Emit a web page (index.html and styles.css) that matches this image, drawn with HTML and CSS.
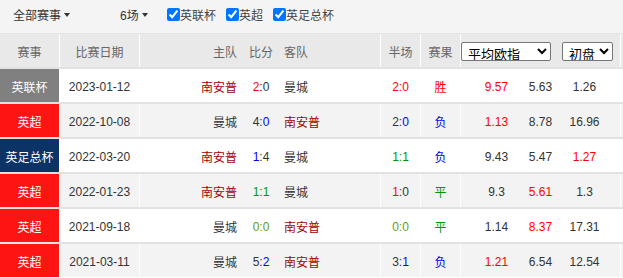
FILE: index.html
```html
<!DOCTYPE html>
<html lang="zh-CN">
<head>
<meta charset="utf-8">
<title>交战历史</title>
<link rel="stylesheet" href="styles.css">
</head>
<body>
<div class="page">
  <div class="toolbar">
    <div class="dropdown dd-league">全部赛事<span class="caret"></span></div>
    <div class="dropdown dd-count">6场<span class="caret"></span></div>
    <label class="chk"><input type="checkbox" checked>英联杯</label>
    <label class="chk"><input type="checkbox" checked>英超</label>
    <label class="chk"><input type="checkbox" checked>英足总杯</label>
  </div>

  <div class="row head">
    <div class="c league">赛事</div>
    <div class="c date">比赛日期</div>
    <div class="c home">主队</div>
    <div class="c score">比分</div>
    <div class="c away">客队</div>
    <div class="c half">半场</div>
    <div class="c res">赛果</div>
    <div class="c odds selects">
      <select class="sel sel-wide"><option>平均欧指</option></select>
      <select class="sel sel-narrow"><option>初盘</option></select>
    </div>
    <div class="c rest"></div>
  </div>

  <div class="row">
    <div class="c league lg-cup">英联杯</div>
    <div class="c date">2023-01-12</div>
    <div class="c home team-hl">南安普</div>
    <div class="c score"><span class="red">2</span>:0</div>
    <div class="c away">曼城</div>
    <div class="c half"><span class="red">2:0</span></div>
    <div class="c res red">胜</div>
    <div class="c odds"><span class="o red">9.57</span><span class="o">5.63</span><span class="o">1.26</span></div>
    <div class="c rest"></div>
  </div>

  <div class="row alt">
    <div class="c league lg-pl">英超</div>
    <div class="c date">2022-10-08</div>
    <div class="c home">曼城</div>
    <div class="c score">4:<span class="blue">0</span></div>
    <div class="c away team-hl">南安普</div>
    <div class="c half">2:<span class="blue">0</span></div>
    <div class="c res blue">负</div>
    <div class="c odds"><span class="o red">1.13</span><span class="o">8.78</span><span class="o">16.96</span></div>
    <div class="c rest"></div>
  </div>

  <div class="row">
    <div class="c league lg-fa">英足总杯</div>
    <div class="c date">2022-03-20</div>
    <div class="c home team-hl">南安普</div>
    <div class="c score"><span class="blue">1</span>:4</div>
    <div class="c away">曼城</div>
    <div class="c half green">1:1</div>
    <div class="c res blue">负</div>
    <div class="c odds"><span class="o">9.43</span><span class="o">5.47</span><span class="o red">1.27</span></div>
    <div class="c rest"></div>
  </div>

  <div class="row alt">
    <div class="c league lg-pl">英超</div>
    <div class="c date">2022-01-23</div>
    <div class="c home team-hl">南安普</div>
    <div class="c score green">1:1</div>
    <div class="c away">曼城</div>
    <div class="c half"><span class="red">1</span>:0</div>
    <div class="c res green">平</div>
    <div class="c odds"><span class="o">9.3</span><span class="o red">5.61</span><span class="o">1.3</span></div>
    <div class="c rest"></div>
  </div>

  <div class="row">
    <div class="c league lg-pl">英超</div>
    <div class="c date">2021-09-18</div>
    <div class="c home">曼城</div>
    <div class="c score olive">0:0</div>
    <div class="c away team-hl">南安普</div>
    <div class="c half olive">0:0</div>
    <div class="c res green">平</div>
    <div class="c odds"><span class="o">1.14</span><span class="o red">8.37</span><span class="o">17.31</span></div>
    <div class="c rest"></div>
  </div>

  <div class="row alt">
    <div class="c league lg-pl">英超</div>
    <div class="c date">2021-03-11</div>
    <div class="c home">曼城</div>
    <div class="c score">5:<span class="blue">2</span></div>
    <div class="c away team-hl">南安普</div>
    <div class="c half">3:<span class="blue">1</span></div>
    <div class="c res blue">负</div>
    <div class="c odds"><span class="o red">1.21</span><span class="o">6.54</span><span class="o">12.54</span></div>
    <div class="c rest"></div>
  </div>
</div>
</body>
</html>
```

FILE: styles.css
```css
* { box-sizing: border-box; }

html, body {
  margin: 0;
  padding: 0;
  background: #fff;
}

body {
  font-family: "Liberation Sans", "Noto Sans CJK SC", sans-serif;
  font-size: 12px;
  color: #333;
  overflow: hidden;
}

.page {
  width: 623px;
  overflow: hidden;
}

/* top filter bar */
.toolbar {
  height: 34px;
  background: #f4f4f4;
  border-bottom: 1px solid #e4e4e4;
  display: flex;
  align-items: center;
  padding-left: 13px;
  padding-bottom: 4px;
}

.dropdown {
  display: flex;
  align-items: center;
  color: #333;
}

.dd-league { width: 107px; }
.dd-count { width: 47px; }

.caret {
  display: inline-block;
  margin-left: 3px;
  width: 0;
  height: 0;
  border-left: 3px solid transparent;
  border-right: 3px solid transparent;
  border-top: 4px solid #333;
}

.chk {
  display: flex;
  align-items: center;
  margin-right: 10px;
  color: #444;
}

.chk input {
  margin: 0;
  width: 13px;
  height: 13px;
}

/* table rows */
.row {
  display: grid;
  grid-template-columns: 60px 80px 103px 36px 102px 40px 40px 160px 1fr;
  height: 35px;
  border-top: 2px solid #e2e2e2;
  background: #fff;
}

.row.alt { background: #f3f3f3; }

.row.head {
  height: 33px;
  border-top: 0;
  background: #e9e9e9;
  color: #666;
}

.c {
  display: flex;
  align-items: center;
  justify-content: center;
  padding-top: 2px;
  white-space: nowrap;
}

.head .c { padding-top: 1px; }

.league,
.date,
.away,
.half,
.res,
.odds {
  border-right: 1px solid #fff;
}

.league { color: #fff; }
.head .league { color: #666; }

.lg-cup { background: #808080; }
.lg-pl { background: #ff1414; }
.lg-fa { background: #0c3366; }

.home {
  justify-content: flex-end;
  padding-right: 6px;
}

.away {
  justify-content: flex-start;
  padding-left: 5px;
}

.team-hl { color: #a00000; }

.odds .o {
  width: 44px;
  text-align: center;
}

.selects {
  justify-content: flex-start;
  gap: 11px;
}

.sel {
  height: 19px;
  font-family: "Noto Sans CJK SC", sans-serif;
  font-size: 13px;
  color: #000;
  background: #fff;
  border: 1px solid #767676;
  border-radius: 2px;
  padding: 0 0 0 2px;
  line-height: 17px;
}

.sel-wide { width: 90px; }
.sel-narrow { width: 51px; }

.red { color: #ff0000; }
.blue { color: #0000ff; }
.green { color: #009900; }
.olive { color: #66a000; }
```
